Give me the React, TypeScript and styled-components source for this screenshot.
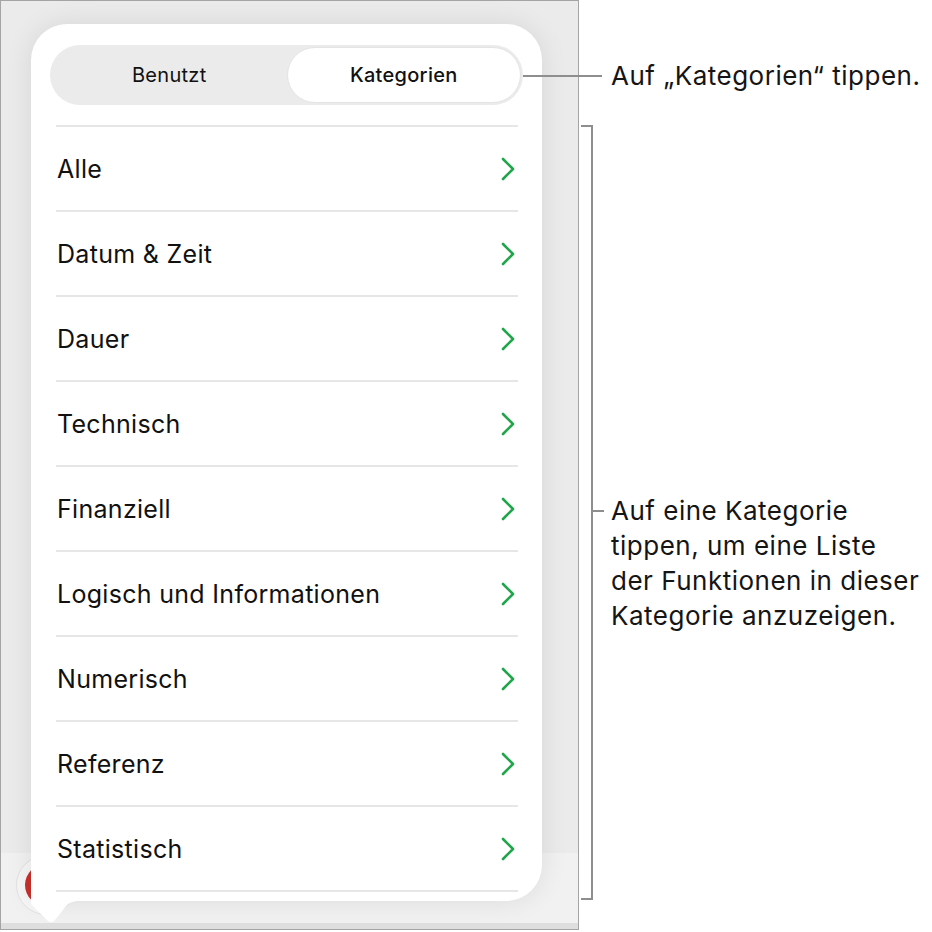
import React from "react";
import styled, { createGlobalStyle } from "styled-components";

const GlobalStyle = createGlobalStyle`
  body {
    margin: 0;
    background: #ffffff;
    font-family: Inter, "Liberation Sans", sans-serif;
    color: #111111;
  }
`;

const Page = styled.div`
  display: flex;
  align-items: flex-start;
  width: 932px;
  height: 932px;
  overflow: hidden;
`;

/* device screen: popover and toolbar share one grid cell */
const Screen = styled.div`
  display: grid;
  grid-template: 1fr / 1fr;
  flex: none;
  width: 579px;
  height: 930px;
  box-sizing: border-box;
  border: 1px solid #a4a4a4;
  background: #ebebeb;
  overflow: hidden;
`;

const Toolbar = styled.div`
  grid-area: 1 / 1;
  align-self: end;
  display: flex;
  align-items: center;
  height: 76px;
  box-sizing: border-box;
  padding: 0 0 6px 15px;
  background: #f1f1f1;
  border-bottom: 6px solid #dedede;
`;

const ToolButton = styled.div`
  display: flex;
  align-items: center;
  justify-content: center;
  width: 60px;
  height: 60px;
  border-radius: 50%;
  background: #f6f6f6;
  border: 1px solid #e2e2e2;
  box-sizing: border-box;
`;

const RedDot = styled.div`
  width: 42px;
  height: 42px;
  border-radius: 50%;
  background: #c8302c;
`;

const Popover = styled.div`
  grid-area: 1 / 1;
  align-self: start;
  position: relative;
  z-index: 1;
  margin: 23px 0 0 30px;
  width: 511px;
  height: 877px;
  box-sizing: border-box;
  background: #ffffff;
  border-radius: 36px 36px 36px 0;
  box-shadow: 0 0 28px rgba(0, 0, 0, 0.09);
  padding: 21px 24px 0 19px;
`;

const Tail = styled.svg`
  position: absolute;
  left: 0;
  bottom: -23px;
`;

const Segmented = styled.div`
  display: grid;
  grid-template-columns: 1fr 1fr;
  width: 473px;
  height: 60px;
  box-sizing: border-box;
  padding: 2px;
  border-radius: 30px;
  background: #ebebeb;
`;

const Segment = styled.div<{ $active?: boolean }>`
  display: flex;
  align-items: center;
  justify-content: center;
  border-radius: 28px;
  font-size: 20px;
  letter-spacing: 0.3px;
  font-weight: ${(p) => (p.$active ? 500 : 400)};
  color: #111111;
  background: ${(p) => (p.$active ? "#ffffff" : "transparent")};
  border: 1px solid ${(p) => (p.$active ? "#e4e4e4" : "transparent")};
`;

const List = styled.div`
  margin: 20px 0 0 6px;
  width: 462px;
  border-bottom: 2px solid #e6e6e6;
`;

const Row = styled.div`
  display: flex;
  align-items: center;
  justify-content: space-between;
  height: 85px;
  box-sizing: border-box;
  border-top: 2px solid #e6e6e6;
  padding: 0 3px 0 1px;
  font-size: 25px;
  letter-spacing: 0.3px;
  color: #111111;
`;

/* annotation column to the right of the screen */
const Notes = styled.div`
  display: flex;
  flex-direction: column;
  padding-top: 58px;
`;

const Callout = styled.div`
  position: relative;
  z-index: 2;
  display: flex;
  align-items: center;
  gap: 9px;
  margin-left: -56px;
`;

const Leader = styled.div<{ $width: number }>`
  flex: none;
  width: ${(p) => p.$width}px;
  height: 2px;
  background: #8e8e8e;
`;

const NoteText = styled.div`
  font-size: 26px;
  line-height: 35px;
  letter-spacing: 0.5px;
  color: #151515;
  white-space: nowrap;
`;

const BracketRow = styled.div`
  display: flex;
  align-items: center;
  margin: 32px 0 0 2px;
`;

const Bracket = styled.div`
  flex: none;
  width: 10px;
  height: 771px;
  border: 2px solid #8e8e8e;
  border-left: none;
`;

const BracketNote = styled.div`
  display: flex;
  align-items: flex-start;
  gap: 7px;
  padding-top: 100px;
`;

const Tick = styled.div`
  flex: none;
  width: 11px;
  height: 2px;
  margin-top: 17px;
  background: #8e8e8e;
`;

const categories = [
  "Alle",
  "Datum & Zeit",
  "Dauer",
  "Technisch",
  "Finanziell",
  "Logisch und Informationen",
  "Numerisch",
  "Referenz",
  "Statistisch",
];

function Chevron() {
  return (
    <svg width="14" height="24" viewBox="0 0 14 24">
      <path
        d="M2 2 L12 12 L2 22"
        fill="none"
        stroke="#1fa64a"
        strokeWidth="2.6"
        strokeLinecap="round"
        strokeLinejoin="round"
      />
    </svg>
  );
}

export default function App() {
  return (
    <Page>
      <GlobalStyle />
      <Screen>
        <Toolbar>
          <ToolButton>
            <RedDot />
          </ToolButton>
        </Toolbar>
        <Popover>
          <Segmented>
            <Segment>Benutzt</Segment>
            <Segment $active>Kategorien</Segment>
          </Segmented>
          <List>
            {categories.map((name) => (
              <Row key={name}>
                <span>{name}</span>
                <Chevron />
              </Row>
            ))}
          </List>
          <Tail width="48" height="28" viewBox="0 0 48 28">
            <path d="M0 0 L0 8 L17 25 Q21 28 24 24 L36 9 Q40 5 48 5 L48 0 Z" fill="#ffffff" />
          </Tail>
        </Popover>
      </Screen>

      <Notes>
        <Callout>
          <Leader $width={79} />
          <NoteText>Auf „Kategorien“ tippen.</NoteText>
        </Callout>
        <BracketRow>
          <Bracket />
          <BracketNote>
            <Tick />
            <NoteText>
              Auf eine Kategorie
              <br />
              tippen, um eine Liste
              <br />
              der Funktionen in dieser
              <br />
              Kategorie anzuzeigen.
            </NoteText>
          </BracketNote>
        </BracketRow>
      </Notes>
    </Page>
  );
}
